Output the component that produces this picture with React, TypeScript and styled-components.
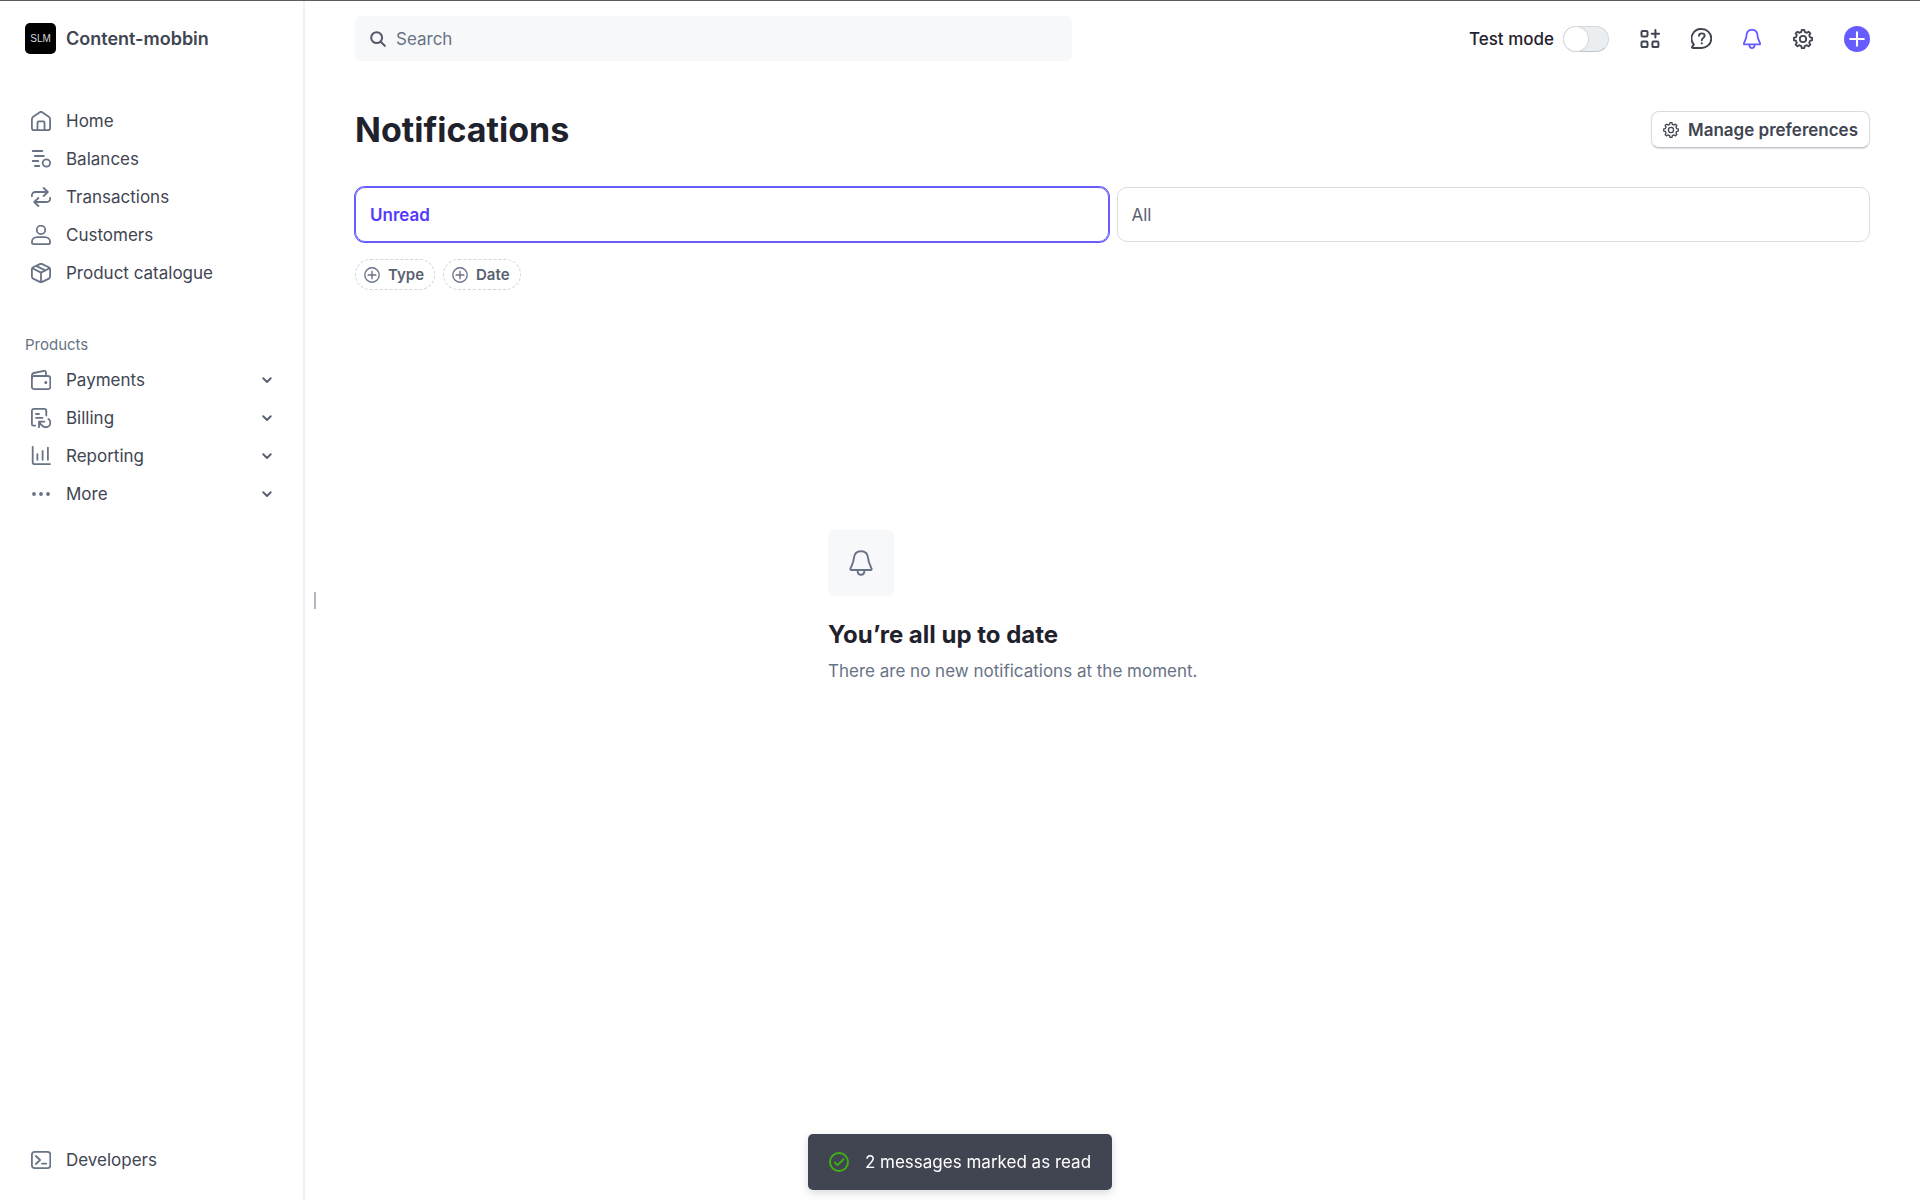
import React, { useState } from 'react';
import styled, { createGlobalStyle, css } from 'styled-components';

const color = {
  text: '#414552',
  strong: '#1f222c',
  subdued: '#687385',
  brand: '#675dff',
  brandText: '#533afd',
  border: '#d8dee4',
  surface: '#f6f8fa',
};

const GlobalStyle = createGlobalStyle`
  *, *::before, *::after { box-sizing: border-box; }
  body {
    margin: 0;
    background: #fff;
    color: ${color.text};
    font-family: Inter, 'Liberation Sans', sans-serif;
    font-size: 17px;
    line-height: 24px;
  }
  button, input { font: inherit; color: inherit; }
  button { margin: 0; padding: 0; border: 0; background: none; cursor: pointer; }
  h1, h2, p, ul { margin: 0; padding: 0; }
  ul { list-style: none; }
`;

const Page = styled.div`
  display: flex;
  min-height: 100vh;
  border-top: 1px solid #5c5c60;
`;

const Sidebar = styled.aside`
  flex: none;
  display: flex;
  flex-direction: column;
  width: 305px;
  padding: 22px 25px 21px;
  border-right: 2px solid #f0f0f7;
`;

const Account = styled.button`
  display: flex;
  align-items: center;
  gap: 10px;
  margin-bottom: 48px;
  font-size: 18px;
  font-weight: 600;
  text-align: left;
`;

const AccountLogo = styled.span`
  display: grid;
  place-items: center;
  width: 31px;
  height: 31px;
  border-radius: 5px;
  background: #000;
  color: #d4d8de;
  font-family: 'Liberation Sans', sans-serif;
  font-size: 10px;
  font-weight: 400;
  line-height: 12px;
`;

const NavList = styled.ul`
  display: flex;
  flex-direction: column;
`;

const navRow = css`
  display: flex;
  align-items: center;
  gap: 15px;
  width: 100%;
  height: 38px;
  padding: 0 6px;
  color: ${color.subdued};
  text-align: left;
  text-decoration: none;
`;

const NavLink = styled.a`
  ${navRow}
`;

const NavToggle = styled.button`
  ${navRow}
`;

const NavLabel = styled.span`
  flex: 1;
  color: ${color.text};
`;

const SectionTitle = styled.h2`
  margin: 41px 0 4px;
  color: ${color.subdued};
  font-size: 15px;
  font-weight: 400;
  line-height: 24px;
`;

const SidebarFooter = styled.div`
  margin-top: auto;
`;

const ResizeRail = styled.div`
  flex: none;
  display: flex;
  align-items: center;
  justify-content: center;
  width: 20px;
`;

const ResizeGrip = styled.span`
  width: 2px;
  height: 17px;
  background: #b4b8c2;
`;

const Main = styled.main`
  flex: 1;
  min-width: 0;
  padding: 0 50px 0 30px;
`;

const TopBar = styled.header`
  display: flex;
  align-items: center;
  justify-content: space-between;
  gap: 32px;
  padding: 15px 0 14px;
`;

const SearchBox = styled.label`
  display: flex;
  align-items: center;
  flex: 0 1 717px;
  gap: 10px;
  height: 45px;
  padding: 0 15px;
  border-radius: 7px;
  background: ${color.surface};
`;

const SearchInput = styled.input`
  flex: 1;
  min-width: 0;
  padding: 0;
  border: 0;
  outline: 0;
  background: transparent;
  &::placeholder { color: ${color.subdued}; opacity: 1; }
`;

const Actions = styled.div`
  display: flex;
  align-items: center;
  gap: 30px;
`;

const ModeSwitch = styled.label`
  display: flex;
  align-items: center;
  gap: 9px;
  color: ${color.strong};
  font-weight: 500;
`;

const Switch = styled.input`
  appearance: none;
  display: flex;
  width: 46px;
  height: 26px;
  margin: 0;
  border: 1px solid #d5d8dd;
  border-bottom-color: #bfc3ca;
  border-radius: 13px;
  background: #ebeef1;
  cursor: pointer;
  &::before {
    content: '';
    width: 24px;
    height: 24px;
    border-radius: 50%;
    background: #fff;
    box-shadow: 0 0 0 1px #d5d8dd;
  }
  &:checked { justify-content: flex-end; }
`;

const IconGroup = styled.div`
  display: flex;
  gap: 29px;
`;

const IconButton = styled.button<{ $tone?: string }>`
  display: grid;
  place-items: center;
  width: 22px;
  height: 26px;
  color: ${(p) => p.$tone ?? color.text};
`;

const CreateButton = styled.button`
  display: grid;
  place-items: center;
  width: 26px;
  height: 26px;
  border-radius: 50%;
  background: ${color.brand};
  color: #fff;
`;

const TitleRow = styled.div`
  display: flex;
  align-items: center;
  justify-content: space-between;
  margin: 36px 0 39px;
`;

const Title = styled.h1`
  color: ${color.strong};
  font-size: 34px;
  font-weight: 700;
  line-height: 36px;
`;

const OutlineButton = styled.button`
  display: flex;
  align-items: center;
  gap: 9px;
  height: 37px;
  padding: 0 11px;
  border: 1px solid #d8dce3;
  border-bottom-color: #c0c4cc;
  border-radius: 8px;
  box-shadow: 0 1px 1px rgba(33, 37, 44, 0.16);
  font-weight: 600;
`;

const Tabs = styled.div`
  display: grid;
  grid-template-columns: 1fr 1fr;
  gap: 8px;
`;

const Tab = styled.button<{ $selected: boolean }>`
  height: 55px;
  padding: 0 14px;
  border: 1px solid ${(p) => (p.$selected ? color.brand : color.border)};
  border-radius: 10px;
  box-shadow: ${(p) => (p.$selected ? `0 0 0 1px ${color.brand}` : 'none')};
  color: ${(p) => (p.$selected ? color.brandText : '#596171')};
  font-weight: ${(p) => (p.$selected ? 600 : 400)};
  text-align: left;
`;

const Filters = styled.div`
  display: flex;
  gap: 8px;
  margin-top: 17px;
`;

const FilterChip = styled.button`
  display: flex;
  align-items: center;
  gap: 8px;
  height: 31px;
  padding: 0 10px 0 8px;
  border: 1px dashed #cfd5dd;
  border-radius: 16px;
  color: #596171;
  font-size: 15px;
  font-weight: 600;
`;

const EmptyState = styled.section`
  max-width: 569px;
  margin: 0 auto;
  padding: 20vh 0 40px;
`;

const EmptyIcon = styled.div`
  display: grid;
  place-items: center;
  width: 66px;
  height: 66px;
  margin-bottom: 23px;
  border-radius: 6px;
  background: ${color.surface};
  color: ${color.subdued};
`;

const EmptyTitle = styled.h2`
  margin-bottom: 8px;
  color: ${color.strong};
  font-size: 24px;
  font-weight: 700;
  line-height: 32px;
`;

const EmptyText = styled.p`
  color: ${color.subdued};
`;

const ToastLayer = styled.div`
  position: fixed;
  right: 0;
  bottom: 10px;
  left: 0;
  display: flex;
  justify-content: center;
  pointer-events: none;
`;

const Toast = styled.div`
  display: flex;
  align-items: center;
  gap: 16px;
  height: 56px;
  padding: 0 21px;
  border-radius: 5px;
  background: #414552;
  box-shadow: 0 3px 8px rgba(65, 69, 82, 0.2);
  color: #fff;
`;

const Glyph = styled.svg`
  flex: none;
  display: block;
  fill: none;
  stroke: currentColor;
  stroke-linecap: round;
  stroke-linejoin: round;
`;

type IconProps = { size?: number; stroke?: number; tint?: string; children?: React.ReactNode };

const Icon = ({ size = 20, stroke = 1.8, tint, children }: IconProps) => (
  <Glyph viewBox="0 0 20 20" width={size} height={size} strokeWidth={stroke} color={tint} aria-hidden="true">
    {children}
  </Glyph>
);

const gearOutline = (() => {
  const points: string[] = [];
  for (let tooth = 0; tooth < 8; tooth += 1) {
    const shape: [number, number][] = [[-13, 7.3], [-8, 9.2], [8, 9.2], [13, 7.3]];
    shape.forEach(([offset, radius]) => {
      const angle = ((tooth * 45 + offset - 90) * Math.PI) / 180;
      points.push(`${(10 + radius * Math.cos(angle)).toFixed(2)} ${(10 + radius * Math.sin(angle)).toFixed(2)}`);
    });
  }
  return `M${points.join('L')}Z`;
})();

const GearIcon = (props: IconProps) => (
  <Icon {...props}>
    <path d={gearOutline} />
    <circle cx="10" cy="10" r="3.2" />
  </Icon>
);

const BellIcon = (props: IconProps) => (
  <Icon {...props}>
    <path d="M10 .9C6.800.9 4.800 3 4.600 6 4.400 9.400 3.700 10.600 2 14c-.4.9-.1 1.400.7 1.400h14.600c.8 0 1.100-.5.7-1.400-1.700-3.400-2.400-4.600-2.600-8C15.200 3 13.200.9 10 .9Z" />
    <path d="M7.400 15.600c0 2 1 3.500 2.600 3.500s2.600-1.500 2.600-3.500" />
  </Icon>
);

const HomeIcon = () => (
  <Icon>
    <path d="M.9 8.200c0-1.100.4-1.900 1.300-2.500L8.500 1.400c1-.7 2-.7 3 0l6.300 4.300c.9.6 1.300 1.400 1.300 2.500v8.700c0 1.400-.8 2.200-2.200 2.200H3.100C1.700 19.100.9 18.300.9 16.900Z" />
    <path d="M6.500 19v-7.300c0-.8.500-1.300 1.300-1.300h4.400c.8 0 1.300.5 1.300 1.300V19" />
  </Icon>
);

const BalancesIcon = () => (
  <Icon>
    <path d="M1.700 2h9.600M3.900 7h8.900M1.700 12h5.600M3.900 17h4.400" />
    <circle cx="15.400" cy="14" r="3.700" />
  </Icon>
);

const TransactionsIcon = () => (
  <Icon>
    <path d="M.9 9.200V8.500C.9 6.400 2.400 5 4.500 5h11.800M12.600 1l4.200 4-4.200 4" />
    <path d="M19.100 10.800v.7c0 2.100-1.500 3.500-3.600 3.500H3.700M7.400 11l-4.200 4 4.200 4" />
  </Icon>
);

const CustomersIcon = () => (
  <Icon>
    <circle cx="10" cy="4.900" r="4.200" />
    <path d="M.9 17.200c0-3.100 2.300-5 5.400-5h7.400c3.100 0 5.400 1.900 5.400 5 0 1.300-.6 1.900-1.900 1.900H2.800c-1.300 0-1.900-.6-1.900-1.900Z" />
  </Icon>
);

const CatalogueIcon = () => (
  <Icon>
    <path d="M8.800 1.100c.8-.4 1.600-.4 2.400 0l6.600 3.200c.9.5 1.300 1.100 1.300 2v7.300c0 .9-.4 1.600-1.200 2l-6.700 3.300c-.8.4-1.600.4-2.400 0l-6.700-3.300c-.8-.4-1.200-1.100-1.200-2V6.300c0-.9.4-1.500 1.300-2Z" />
    <path d="m1.400 5.300 8.600 4.300 8.600-4.300M10 9.600V19M5.600 3.100l8.600 4.300" />
  </Icon>
);

const PaymentsIcon = () => (
  <Icon>
    <rect x=".9" y="6" width="18.400" height="13.100" rx="2.200" />
    <path d="M.9 8.200V5.400c0-1.400.6-2.100 1.900-2.400L13 .9c1.200-.2 1.900.3 1.900 1.500V5.700" />
    <circle cx="14.800" cy="12.500" r="1" fill="currentColor" stroke="none" />
    <circle cx="14.800" cy="12.500" r=".6" />
  </Icon>
);

const BillingIcon = () => (
  <Icon>
    <path d="M15.300 7.500V3.100c0-1.400-.8-2.200-2.200-2.200H3.100C1.700.9.900 1.700.9 3.100v13.200c0 .9.500 1.400 1.300 1.400h1.900" />
    <path d="M5 6h3M5 9.800h6.500" />
    <path d="M8 19.200v-5.600h5.400M8.300 14c1.700 2.900 3.400 5.200 6.500 5.200 2.500 0 4.500-1.900 4.500-4.400 0-1.700-.7-3-1.900-3.900" />
  </Icon>
);

const ReportingIcon = () => (
  <Icon>
    <path d="M1.700 1v15.200c0 1.200.6 1.900 1.900 1.900H19M6.400 8.200v5.600M11.600 5v8.800M16.900 1.700v12.100" />
  </Icon>
);

const MoreIcon = () => (
  <Icon>
    <g fill="currentColor" stroke="none">
      <circle cx="3" cy="10" r="1.900" />
      <circle cx="10" cy="10" r="1.900" />
      <circle cx="17" cy="10" r="1.900" />
    </g>
  </Icon>
);

const DevelopersIcon = () => (
  <Icon>
    <rect x=".9" y="1.900" width="18.400" height="16.200" rx="2.600" />
    <path d="m4.900 6 4.200 4-4.200 4M11 13.600h4.200" />
  </Icon>
);

const ChevronIcon = () => (
  <Icon size={10} stroke={3.8} tint="#596171">
    <path d="m2.500 6.500 7.500 7.500 7.500-7.500" />
  </Icon>
);

const SearchIcon = () => (
  <Icon size={16} stroke={2.500} tint="#545969">
    <circle cx="8.300" cy="8.300" r="6.800" />
    <path d="m13.400 13.400 5.200 5.200" />
  </Icon>
);

const AppsIcon = () => (
  <Icon stroke={2}>
    <rect x="1.500" y="1.900" width="6" height="5.600" rx="1.200" />
    <rect x="1.500" y="12.500" width="6" height="5.600" rx="1.200" />
    <rect x="12.400" y="12.500" width="6" height="5.600" rx="1.200" />
    <path d="M15.400 1v7.400M11.700 4.700h7.400" />
  </Icon>
);

const HelpIcon = () => (
  <Icon size={21} stroke={1.8}>
    <path d="M10.300 1a9 9 0 0 1 0 18H1.700c-.8 0-1-.8-.5-1.300l1.500-1.900A9 9 0 0 1 10.300 1Z" />
    <path d="M7.600 7.400c.1-1.500 1.200-2.300 2.700-2.300s2.700.9 2.700 2.300c0 1.900-2.700 2.200-2.700 4.300" />
    <circle cx="10.300" cy="14.600" r=".5" fill="currentColor" strokeWidth="1" />
  </Icon>
);

const PlusIcon = () => (
  <Icon size={16} stroke={2.600}>
    <path d="M10 1.500v17M1.500 10h17" />
  </Icon>
);

const AddCircleIcon = () => (
  <Icon size={16} stroke={1.700} tint={color.subdued}>
    <circle cx="10" cy="10" r="9" />
    <path d="M10 5.200v9.600M5.200 10h9.600" />
  </Icon>
);

const CheckCircleIcon = () => (
  <Icon stroke={1.900} tint="#3fb211">
    <circle cx="10" cy="10" r="9" />
    <path d="m5.800 10.400 2.800 2.800 6-6" />
  </Icon>
);

const mainLinks = [
  { label: 'Home', icon: <HomeIcon /> },
  { label: 'Balances', icon: <BalancesIcon /> },
  { label: 'Transactions', icon: <TransactionsIcon /> },
  { label: 'Customers', icon: <CustomersIcon /> },
  { label: 'Product catalogue', icon: <CatalogueIcon /> },
];

const productLinks = [
  { label: 'Payments', icon: <PaymentsIcon /> },
  { label: 'Billing', icon: <BillingIcon /> },
  { label: 'Reporting', icon: <ReportingIcon /> },
  { label: 'More', icon: <MoreIcon /> },
];

export default function App() {
  const [tab, setTab] = useState('Unread');

  return (
    <>
      <GlobalStyle />
      <Page>
        <Sidebar>
          <Account type="button">
            <AccountLogo aria-hidden="true">SLM</AccountLogo>
            Content-mobbin
          </Account>
          <nav>
            <NavList>
              {mainLinks.map(({ label, icon }) => (
                <li key={label}>
                  <NavLink href="#">
                    {icon}
                    <NavLabel>{label}</NavLabel>
                  </NavLink>
                </li>
              ))}
            </NavList>
            <SectionTitle>Products</SectionTitle>
            <NavList>
              {productLinks.map(({ label, icon }) => (
                <li key={label}>
                  <NavToggle type="button" aria-expanded="false">
                    {icon}
                    <NavLabel>{label}</NavLabel>
                    <ChevronIcon />
                  </NavToggle>
                </li>
              ))}
            </NavList>
          </nav>
          <SidebarFooter>
            <NavLink href="#">
              <DevelopersIcon />
              <NavLabel>Developers</NavLabel>
            </NavLink>
          </SidebarFooter>
        </Sidebar>
        <ResizeRail>
          <ResizeGrip />
        </ResizeRail>
        <Main>
          <TopBar>
            <SearchBox>
              <SearchIcon />
              <SearchInput type="search" placeholder="Search" aria-label="Search" />
            </SearchBox>
            <Actions>
              <ModeSwitch>
                Test mode
                <Switch type="checkbox" role="switch" />
              </ModeSwitch>
              <IconGroup>
                <IconButton type="button" aria-label="Apps"><AppsIcon /></IconButton>
                <IconButton type="button" aria-label="Help"><HelpIcon /></IconButton>
                <IconButton type="button" aria-label="Notifications" $tone={color.brand}>
                  <BellIcon />
                </IconButton>
                <IconButton type="button" aria-label="Settings"><GearIcon /></IconButton>
              </IconGroup>
              <CreateButton type="button" aria-label="Create"><PlusIcon /></CreateButton>
            </Actions>
          </TopBar>
          <TitleRow>
            <Title>Notifications</Title>
            <OutlineButton type="button">
              <GearIcon size={16} stroke={1.600} />
              Manage preferences
            </OutlineButton>
          </TitleRow>
          <Tabs role="tablist">
            {['Unread', 'All'].map((name) => (
              <Tab
                key={name}
                type="button"
                role="tab"
                aria-selected={tab === name}
                $selected={tab === name}
                onClick={() => setTab(name)}
              >
                {name}
              </Tab>
            ))}
          </Tabs>
          <Filters>
            {['Type', 'Date'].map((name) => (
              <FilterChip key={name} type="button">
                <AddCircleIcon />
                {name}
              </FilterChip>
            ))}
          </Filters>
          <EmptyState>
            <EmptyIcon>
              <BellIcon size={26} stroke={1.500} />
            </EmptyIcon>
            <EmptyTitle>You’re all up to date</EmptyTitle>
            <EmptyText>There are no new notifications at the moment.</EmptyText>
          </EmptyState>
        </Main>
      </Page>
      <ToastLayer>
        <Toast role="status">
          <CheckCircleIcon />
          2 messages marked as read
        </Toast>
      </ToastLayer>
    </>
  );
}
